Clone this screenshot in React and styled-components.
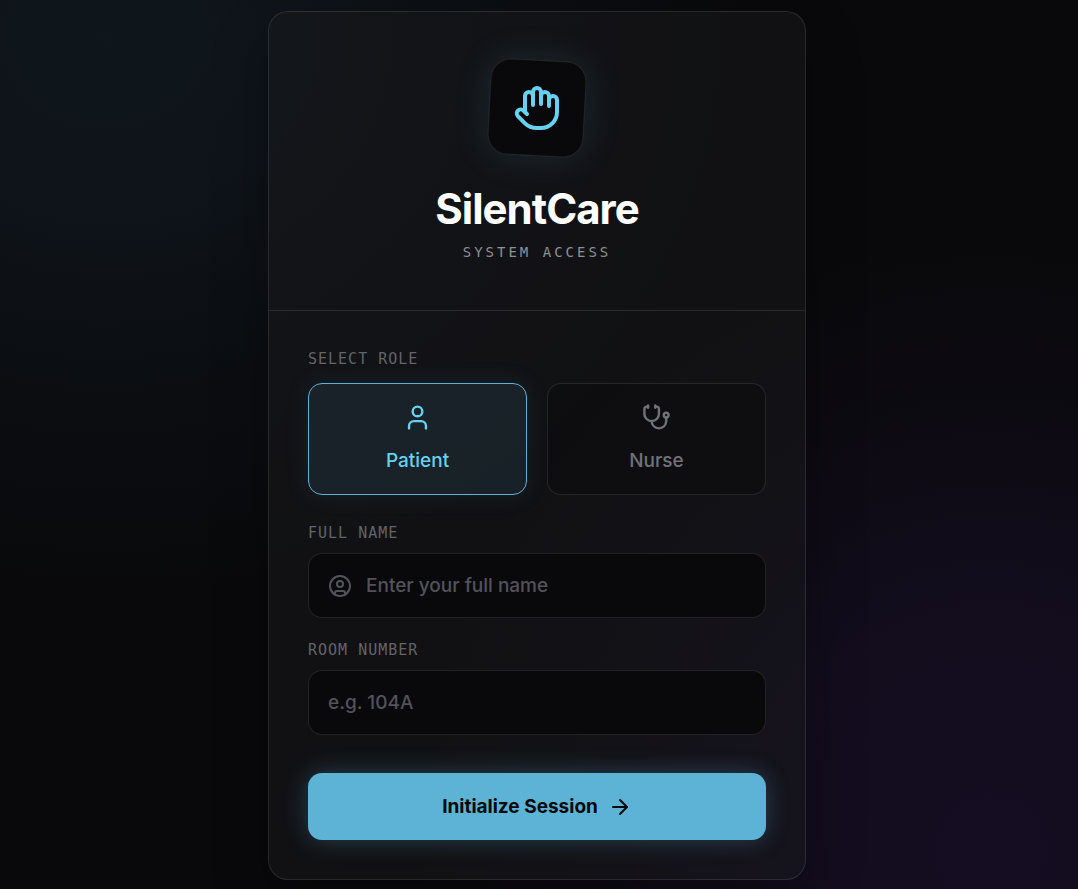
import React, {useState} from 'react'
import styled, {createGlobalStyle} from 'styled-components'
import {Hand, User, Stethoscope, CircleUser, ArrowRight} from 'lucide-react'

const roles = [
    {id: 'patient', title: 'Patient', Icon: User},
    {id: 'nurse', title: 'Nurse', Icon: Stethoscope}
]

export default function App() {
    const [role, setRole] = useState('patient')
    const [name, setName] = useState('')
    const [room, setRoom] = useState('')

    return (
        <>
            <GlobalStyle />
            <Page>
                <Card>
                    <Header>
                        <LogoBox>
                            <Hand size={48} aria-hidden="true" />
                        </LogoBox>
                        <Title>SilentCare</Title>
                        <Subtitle>System Access</Subtitle>
                    </Header>
                    <Form onSubmit={e => e.preventDefault()}>
                        <RoleGroup>
                            <Legend>Select Role</Legend>
                            <Roles>
                                {roles.map(({id, title, Icon}) => (
                                    <RoleButton
                                        key={id}
                                        type="button"
                                        $active={role === id}
                                        aria-pressed={role === id}
                                        onClick={() => setRole(id)}
                                    >
                                        <Icon size={29} aria-hidden="true" />
                                        {title}
                                    </RoleButton>
                                ))}
                            </Roles>
                        </RoleGroup>
                        <Field>
                            <Label htmlFor="name">Full Name</Label>
                            <InputBox>
                                <CircleUser size={24} aria-hidden="true" />
                                <Input
                                    id="name"
                                    value={name}
                                    placeholder="Enter your full name"
                                    onChange={e => setName(e.target.value)}
                                />
                            </InputBox>
                        </Field>
                        <Field>
                            <Label htmlFor="room">Room Number</Label>
                            <InputBox>
                                <Input
                                    id="room"
                                    value={room}
                                    placeholder="e.g. 104A"
                                    onChange={e => setRoom(e.target.value)}
                                />
                            </InputBox>
                        </Field>
                        <SubmitButton type="submit">
                            Initialize Session
                            <ArrowRight size={24} aria-hidden="true" />
                        </SubmitButton>
                    </Form>
                </Card>
            </Page>
        </>
    )
}

const GlobalStyle = createGlobalStyle`
*{
    box-sizing: border-box;
}
body{
    margin: 0;
    background: #09090b;
    color: #fff;
    font-family: Inter, "Liberation Sans", sans-serif;
}
button, input{
    font-family: inherit;
}
`

const Page = styled.main`
display: flex;
align-items: center;
justify-content: center;
min-height: 100vh;
padding: 11px 4px 9px 0;
background:
    radial-gradient(ellipse 60% 64% at 10% 4%, rgba(82, 165, 224, 0.08), rgba(82, 165, 224, 0.07) 30%, rgba(82, 165, 224, 0.03) 60%, rgba(82, 165, 224, 0)),
    radial-gradient(ellipse 54% 70% at 92% 96%, rgba(130, 56, 240, 0.1), rgba(130, 56, 240, 0.08) 40%, rgba(130, 56, 240, 0.03) 70%, rgba(130, 56, 240, 0)),
    #09090b;
`

const Card = styled.section`
width: 100%;
max-width: 538px;
overflow: hidden;
border: 1px solid rgba(255, 255, 255, 0.1);
border-radius: 20px;
background: rgba(24, 24, 26, 0.6);
box-shadow: 0 24px 56px rgba(0, 0, 0, 0.3);
`

const Header = styled.header`
display: flex;
flex-direction: column;
align-items: center;
padding: 48px 39px;
border-bottom: 1px solid rgba(255, 255, 255, 0.1);
`

const LogoBox = styled.div`
display: flex;
align-items: center;
justify-content: center;
width: 96px;
height: 96px;
margin-bottom: 29px;
border: 1px solid rgba(255, 255, 255, 0.1);
border-radius: 20px;
background: #09090b;
color: #67d1f0;
box-shadow: 0 0 36px rgba(92, 179, 214, 0.15);
transform: rotate(3deg);
svg{
    transform: rotate(-3deg);
}
`

const Title = styled.h1`
margin: 0 0 10px;
font-size: 42px;
line-height: 48px;
font-weight: 700;
letter-spacing: -1px;
`

const Subtitle = styled.p`
margin: 0;
color: #8f8f98;
font-family: "DejaVu Sans Mono", monospace;
font-size: 14px;
line-height: 19px;
letter-spacing: 3px;
text-transform: uppercase;
`

const Form = styled.form`
display: flex;
flex-direction: column;
padding: 39px;
`

const RoleGroup = styled.div`
margin-bottom: 29px;
`

const Label = styled.label`
display: block;
margin-bottom: 10px;
color: #63636b;
font-family: "DejaVu Sans Mono", monospace;
font-size: 15px;
line-height: 19px;
letter-spacing: 1px;
text-transform: uppercase;
`

const Legend = styled(Label).attrs({as: 'div'})`
margin-bottom: 14px;
`

const Roles = styled.div`
display: grid;
grid-template-columns: 1fr 1fr;
gap: 20px;
`

const RoleButton = styled.button`
display: flex;
flex-direction: column;
align-items: center;
justify-content: center;
gap: 15px;
height: 112px;
border: 1px solid ${props => props.$active ? '#5cb3d6' : 'rgba(255, 255, 255, 0.1)'};
border-radius: 14px;
background: ${props => props.$active ? 'rgba(92, 179, 214, 0.1)' : 'rgba(9, 9, 11, 0.5)'};
color: ${props => props.$active ? '#67d1f0' : '#71717a'};
box-shadow: ${props => props.$active ? '0 0 24px rgba(92, 179, 214, 0.1)' : 'none'};
font-size: 19px;
line-height: 28px;
font-weight: 500;
cursor: pointer;
`

const Field = styled.div`
margin-bottom: 23px;
`

const InputBox = styled.div`
display: flex;
align-items: center;
gap: 14px;
height: 65px;
padding: 0 19px;
border: 1px solid rgba(255, 255, 255, 0.1);
border-radius: 14px;
background: #09090b;
color: #52525b;
&:focus-within{
    border-color: #5cb3d6;
}
svg{
    flex: none;
}
`

const Input = styled.input`
flex: 1;
min-width: 0;
padding: 0;
border: 0;
outline: 0;
background: transparent;
color: #fff;
font-size: 19px;
line-height: 28px;
font-weight: 500;
&::placeholder{
    color: #52525b;
}
`

const SubmitButton = styled.button`
display: flex;
align-items: center;
justify-content: center;
gap: 10px;
height: 67px;
margin-top: 15px;
border: 0;
border-radius: 14px;
background: #5cb3d6;
color: #09090b;
box-shadow: 0 0 24px rgba(92, 179, 214, 0.3);
font-size: 19px;
line-height: 28px;
font-weight: 700;
cursor: pointer;
`
